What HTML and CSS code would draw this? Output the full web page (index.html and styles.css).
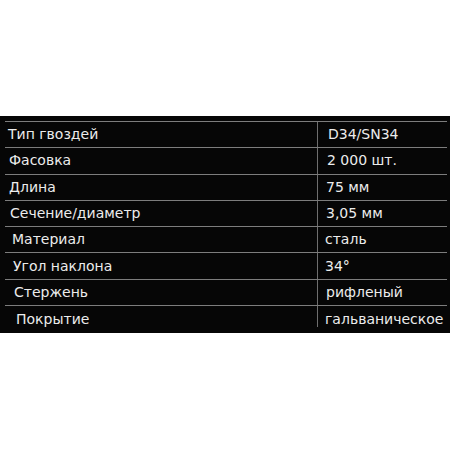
FILE: index.html
```html
<!DOCTYPE html>
<html lang="ru">
<head>
<meta charset="utf-8">
<link rel="stylesheet" href="styles.css">
</head>
<body>
<div class="specs">
  <div class="row r1"><div class="label">Тип гвоздей</div><div class="value">D34/SN34</div></div>
  <div class="row r2"><div class="label">Фасовка</div><div class="value">2 000 шт.</div></div>
  <div class="row r3"><div class="label">Длина</div><div class="value">75 мм</div></div>
  <div class="row r4"><div class="label">Сечение/диаметр</div><div class="value">3,05 мм</div></div>
  <div class="row r5"><div class="label">Материал</div><div class="value">сталь</div></div>
  <div class="row r6"><div class="label">Угол наклона</div><div class="value">34°</div></div>
  <div class="row r7"><div class="label">Стержень</div><div class="value">рифленый</div></div>
  <div class="row r8"><div class="label">Покрытие</div><div class="value">гальваническое</div></div>
</div>
</body>
</html>
```
FILE: styles.css
```css
html, body {
  margin: 0;
  padding: 0;
  background: #ffffff;
}
body {
  width: 450px;
  height: 450px;
  overflow: hidden;
  font-family: "DejaVu Sans", "Liberation Sans", sans-serif;
}
.specs {
  margin-top: 116px;
  height: 217px;
  box-sizing: border-box;
  background: #060606;
  padding: 5px 3px 0 5px;
  display: flex;
  flex-direction: column;
}
.row {
  display: grid;
  grid-template-columns: 312px 1fr;
  height: 26.3px;
  box-sizing: border-box;
  border-top: 1px solid #7c7c7c;
  color: #ececec;
  font-size: 14px;
  line-height: 1;
}
.r8 {
  height: 20px;
}
.label, .value {
  display: flex;
  align-items: center;
  padding-bottom: 1px;
}
.value {
  border-left: 1px solid #6e6e6e;
  padding-left: 9px;
}
.r1 .label { padding-left: 3px; }
.r2 .label { padding-left: 4px; }
.r3 .label { padding-left: 4px; }
.r4 .label { padding-left: 5px; }
.r5 .label { padding-left: 7px; }
.r6 .label { padding-left: 8px; }
.r7 .label { padding-left: 9px; }
.r8 .label { padding-left: 11px; padding-top: 6px; }
.r8 .value { padding-top: 6px; }
.r1 .value { padding-left: 10px; }
.r2 .value { padding-left: 9px; }
.r3 .value { padding-left: 8px; }
.r4 .value { padding-left: 8px; }
.r5 .value { padding-left: 7px; }
.r6 .value { padding-left: 7px; }
.r7 .value { padding-left: 8px; }
.r8 .value { padding-left: 7px; }
```
